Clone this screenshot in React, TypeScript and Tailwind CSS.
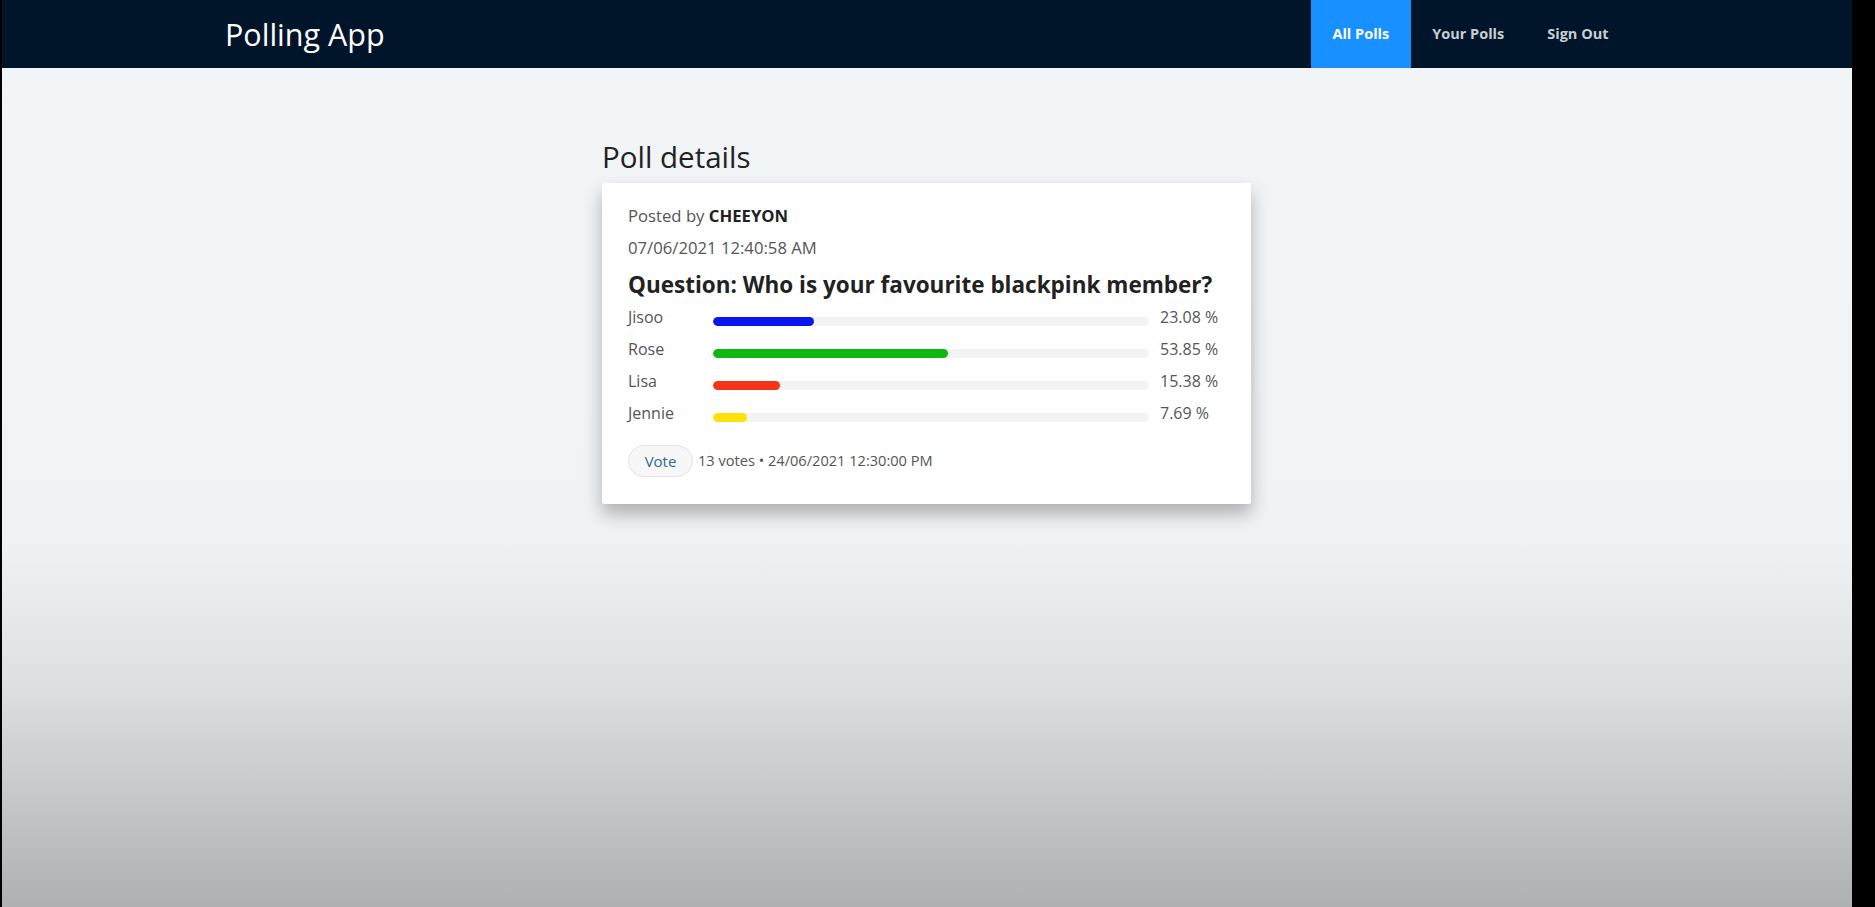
import React from 'react';

const options = [
  { name: 'Jisoo', pct: 23.08, color: 'bg-[#0a16f0]' },
  { name: 'Rose', pct: 53.85, color: 'bg-[#0fb80f]' },
  { name: 'Lisa', pct: 15.38, color: 'bg-[#f5341a]' },
  { name: 'Jennie', pct: 7.69, color: 'bg-[#ffe10a]' },
];

function Header() {
  return (
    <div className="h-[68px] bg-[#001529] flex items-center justify-between pl-[223px] pr-[222px]">
      <div className="text-[30.5px] text-white leading-none">Polling App</div>
      <nav className="flex h-full text-[14.5px] font-bold">
        <a className="h-full flex items-center px-[21.5px] bg-[#1890ff] text-white">All Polls</a>
        <a className="h-full flex items-center px-[21.5px] text-[#c9ced3]">Your Polls</a>
        <a className="h-full flex items-center px-[21.5px] text-[#c9ced3]">Sign Out</a>
      </nav>
    </div>
  );
}

function PollCard() {
  return (
    <div className="bg-white w-[649px] px-[26px] pt-[17px] pb-[27px] shadow-[0_10px_18px_rgba(0,0,0,0.28)] rounded-[2px]">
      <div className="h-[32px] flex items-center text-[16.7px] text-[#555]">
        Posted by&nbsp;<span className="font-bold text-[#222]">CHEEYON</span>
      </div>
      <div className="h-[32px] flex items-center text-[16.7px] text-[#555]">07/06/2021 12:40:58 AM</div>
      <div className="h-[41px] flex items-center text-[22.5px] font-bold text-[#222]">
        Question: Who is your favourite blackpink member?
      </div>
      <div className="flex flex-col">
        {options.map((o) => (
          <div key={o.name} className="h-[32px] flex items-start text-[16px] text-[#555]">
            <div className="w-[85px] leading-[24px]">{o.name}</div>
            <div className="w-[436px] h-[9px] mt-[12px] rounded-full bg-[#f3f3f3] overflow-hidden">
              <div className={`h-full rounded-full ${o.color}`} style={{ width: `${o.pct}%` }} />
            </div>
            <div className="ml-[11px] leading-[24px]">{o.pct.toFixed(2)} %</div>
          </div>
        ))}
      </div>
      <div className="flex items-center mt-[12px]">
        <button className="w-[65px] h-[32px] rounded-full border border-[#e4e4e4] bg-[#f7f7f7] text-[15px] text-[#2f6a93]">
          Vote
        </button>
        <span className="ml-[5px] text-[14.6px] text-[#555]">13 votes • 24/06/2021 12:30:00 PM</span>
      </div>
    </div>
  );
}

export default function App() {
  return (
    <div className="h-[907px] flex bg-black overflow-hidden" style={{ fontFamily: '"Open Sans", "Noto Sans", sans-serif' }}>
      <div className="w-[2px] bg-black" />
      <div className="w-[1850px] h-full flex flex-col bg-[linear-gradient(to_bottom,#f2f5f7_0%,#f0f3f5_59%,#dde1e2_75%,#adb1b2_100%)]">
        <Header />
        <div className="flex flex-col items-center">
          <div className="w-[650px]">
            <h2 className="mt-[72px] mb-[9px] text-[29.5px] leading-[34px] text-[#222]">Poll details</h2>
            <PollCard />
          </div>
        </div>
      </div>
      <div className="flex-1 bg-black" />
    </div>
  );
}
